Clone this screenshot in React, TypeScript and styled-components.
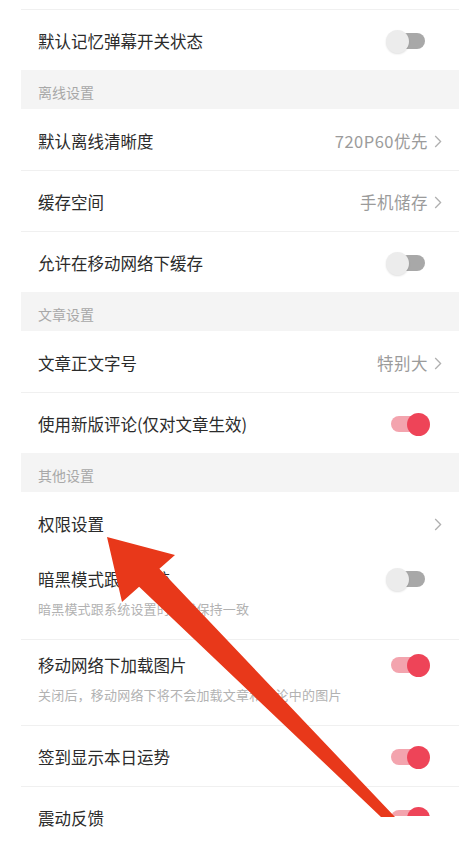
import styled, { createGlobalStyle } from 'styled-components'

const GlobalStyle = createGlobalStyle`
  html, body {
    margin: 0;
    padding: 0;
    background: #fff;
  }
  body {
    font-family: "Noto Sans CJK SC", "Noto Sans", sans-serif;
  }
`

type Item =
  | { kind: 'header'; title: string }
  | {
      kind: 'row'
      label: string
      value?: string
      chevron?: boolean
      toggle?: 'on' | 'off'
      sub?: string
      line?: boolean
      cut?: boolean
    }

const items: Item[] = [
  { kind: 'row', label: '默认记忆弹幕开关状态', toggle: 'off', line: true },
  { kind: 'header', title: '离线设置' },
  { kind: 'row', label: '默认离线清晰度', value: '720P60优先', chevron: true },
  { kind: 'row', label: '缓存空间', value: '手机储存', chevron: true, line: true },
  { kind: 'row', label: '允许在移动网络下缓存', toggle: 'off', line: true },
  { kind: 'header', title: '文章设置' },
  { kind: 'row', label: '文章正文字号', value: '特别大', chevron: true },
  { kind: 'row', label: '使用新版评论(仅对文章生效)', toggle: 'on', line: true },
  { kind: 'header', title: '其他设置' },
  { kind: 'row', label: '权限设置', chevron: true },
  {
    kind: 'row',
    label: '暗黑模式跟随系统',
    toggle: 'off',
    sub: '暗黑模式跟系统设置的模式保持一致'
  },
  {
    kind: 'row',
    label: '移动网络下加载图片',
    toggle: 'on',
    sub: '关闭后，移动网络下将不会加载文章和评论中的图片',
    line: true
  },
  { kind: 'row', label: '签到显示本日运势', toggle: 'on', line: true },
  { kind: 'row', label: '震动反馈', toggle: 'on', line: true, cut: true }
]

function Chevron() {
  return (
    <ChevronSvg width="8" height="13" viewBox="0 0 8 13">
      <path d="M1.2 1 L6.6 6.5 L1.2 12" fill="none" stroke="#b0b0b0" strokeWidth="1.3" />
    </ChevronSvg>
  )
}

function Toggle({ on, cut }: { on: boolean; cut?: boolean }) {
  return (
    <SwitchBox $cut={cut}>
      <Track $on={on} />
      <Knob $on={on} />
    </SwitchBox>
  )
}

export default function App() {
  return (
    <>
      <GlobalStyle />
      <Page>
        <List>
          {items.map((item, index) => {
            if (item.kind === 'header') {
              return <SectionHeader key={index}>{item.title}</SectionHeader>
            }
            return (
              <Row key={index} $line={item.line} $sub={!!item.sub}>
                <Main>
                  <Label>{item.label}</Label>
                  {item.value && <Value>{item.value}</Value>}
                  {item.chevron && <Chevron />}
                  {item.toggle && <Toggle on={item.toggle === 'on'} cut={item.cut} />}
                </Main>
                {item.sub && <Sub>{item.sub}</Sub>}
              </Row>
            )
          })}
        </List>
        {/* the red pointer drawn over the screenshot */}
        <Arrow width="468" height="817" viewBox="0 0 468 817">
          <polygon
            points="107,537 175,555 159.4,568.8 395,817 381,817 139.1,586.8 122,602"
            fill="#e8381a"
          />
        </Arrow>
      </Page>
    </>
  )
}

const Page = styled.div`
  position: relative;
  height: 847px;
  overflow: hidden;
  padding: 9px 9px 0 21px;
  box-sizing: border-box;
`

const List = styled.div`
  display: flex;
  flex-direction: column;
`

const SectionHeader = styled.div`
  height: 39px;
  box-sizing: border-box;
  padding: 5px 17px 0;
  display: flex;
  align-items: center;
  background: #f4f4f4;
  color: #a8a8a8;
  font-size: 14px;
`

const Row = styled.div<{ $line?: boolean; $sub?: boolean }>`
  display: flex;
  flex-direction: column;
  justify-content: ${p => (p.$sub ? 'flex-start' : 'center')};
  box-sizing: border-box;
  height: ${p => (p.$sub ? '86px' : '61px')};
  padding: ${p => (p.$sub ? '13px 17px 0' : '2px 17px 0')};
  border-top: 1px solid ${p => (p.$line ? '#f0f0f0' : 'transparent')};
`

const Main = styled.div`
  display: flex;
  align-items: center;
  height: 24px;
`

const Label = styled.span`
  flex: 1;
  font-size: 16.5px;
  color: #2b2b2b;
  white-space: nowrap;
`

const Value = styled.span`
  font-size: 16.5px;
  letter-spacing: 0.5px;
  color: #9b9b9b;
  margin-right: 6px;
`

const ChevronSvg = styled.svg`
  display: block;
  flex-shrink: 0;
`

const Sub = styled.div`
  margin-top: 9px;
  font-size: 13px;
  letter-spacing: 0.2px;
  line-height: 18px;
  color: #b2b2b2;
  white-space: nowrap;
`

const SwitchBox = styled.div<{ $cut?: boolean }>`
  position: relative;
  width: 44px;
  height: 24px;
  margin-right: 12px;
  flex-shrink: 0;
  clip-path: ${p => (p.$cut ? 'inset(0 0 14px 0)' : 'none')};
`

const Track = styled.div<{ $on: boolean }>`
  position: absolute;
  top: 4px;
  left: ${p => (p.$on ? '5px' : '9px')};
  right: ${p => (p.$on ? '12px' : '5px')};
  height: 16px;
  border-radius: 8px;
  background: ${p => (p.$on ? '#f3a4ae' : '#a8a8a8')};
`

const Knob = styled.div<{ $on: boolean }>`
  position: absolute;
  top: 0.5px;
  left: ${p => (p.$on ? '21px' : '0')};
  width: 23px;
  height: 23px;
  border-radius: 50%;
  background: ${p => (p.$on ? '#ee4458' : '#ececec')};
  box-shadow: ${p => (p.$on ? 'none' : '0 1px 2px rgba(0, 0, 0, 0.12)')};
`

const Arrow = styled.svg`
  position: absolute;
  top: 0;
  left: 0;
  pointer-events: none;
`
